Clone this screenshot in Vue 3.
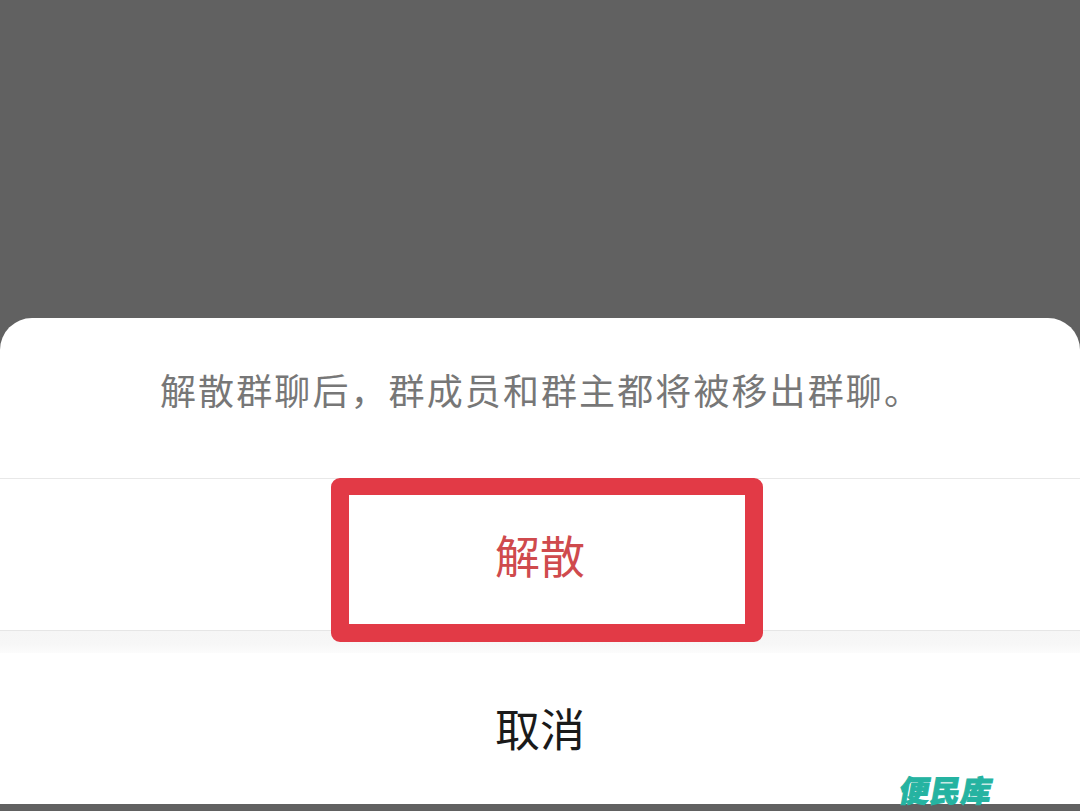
<script setup>
const message = '解散群聊后，群成员和群主都将被移出群聊。'
</script>

<template>
  <div class="screen">
    <div class="backdrop"></div>
    <section class="sheet">
      <p class="message">{{ message }}</p>
      <div class="action danger">
        <span>解散</span>
        <div class="highlight"></div>
      </div>
      <div class="divider"></div>
      <div class="action cancel">
        <span>取消</span>
        <div class="watermark">便民库</div>
      </div>
    </section>
    <div class="footer"></div>
  </div>
</template>

<style scoped>
.screen {
  width: 1080px;
  height: 811px;
  display: flex;
  flex-direction: column;
  background: #616161;
  overflow: hidden;
  font-family: "Noto Sans CJK SC", "Noto Sans", sans-serif;
}
.backdrop {
  height: 318px;
  flex: none;
}
.sheet {
  height: 486px;
  flex: none;
  display: flex;
  flex-direction: column;
  background: #fff;
  border-radius: 32px 32px 0 0;
}
.message {
  height: 161px;
  flex: none;
  margin: 0;
  padding: 49px 0 0 160px;
  box-sizing: border-box;
  border-bottom: 1px solid #e8e8e8;
  font-size: 36px;
  line-height: 44px;
  letter-spacing: 2.1px;
  color: #777;
  white-space: nowrap;
}
.action {
  position: relative;
  display: flex;
  align-items: center;
  justify-content: center;
  flex: none;
  font-size: 45px;
  line-height: 60px;
}
.danger {
  height: 152px;
  padding-top: 1px;
  border-bottom: 1px solid #e6e6e6;
  box-sizing: border-box;
  color: #cf4a4d;
}
.cancel {
  height: 151px;
  padding-bottom: 2px;
  box-sizing: border-box;
  color: #1a1a1a;
}
.divider {
  height: 22px;
  flex: none;
  background: linear-gradient(#f6f6f6, #f7f7f7 60%, #fcfcfc);
}
.highlight {
  position: absolute;
  left: 331px;
  top: -1px;
  width: 432px;
  height: 164px;
  box-sizing: border-box;
  border-style: solid;
  border-color: #e23a46;
  border-width: 17px 18px 18px;
  border-radius: 9px;
}
.watermark {
  position: absolute;
  left: 900px;
  top: 119px;
  font-size: 30px;
  line-height: 34px;
  font-weight: 900;
  letter-spacing: 1px;
  color: #25b3a1;
  -webkit-text-stroke: 1px #25b3a1;
  transform: skewX(-10deg);
}
.footer {
  flex: 1;
  background: #616161;
}
</style>

<style>
body {
  margin: 0;
}
</style>
